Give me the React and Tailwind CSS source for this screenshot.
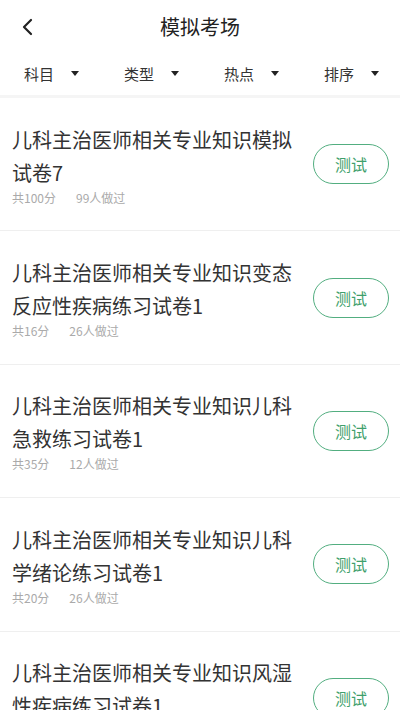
const papers = [
  { title: '儿科主治医师相关专业知识模拟试卷7', total: 100, done: 99 },
  { title: '儿科主治医师相关专业知识变态反应性疾病练习试卷1', total: 16, done: 26 },
  { title: '儿科主治医师相关专业知识儿科急救练习试卷1', total: 35, done: 12 },
  { title: '儿科主治医师相关专业知识儿科学绪论练习试卷1', total: 20, done: 26 },
  { title: '儿科主治医师相关专业知识风湿性疾病练习试卷1', total: 18, done: 20 },
]

const filters = ['科目', '类型', '热点', '排序']

export default function App() {
  return (
    <div
      className="w-[400px] h-[710px] overflow-hidden bg-[#f5f5f5]"
      style={{ fontFamily: '"Noto Sans CJK SC", "Noto Sans", sans-serif' }}
    >
      {/* Header */}
      <div className="bg-white">
        <div className="relative h-[54px] flex items-center justify-center">
          <button className="absolute left-[20px] top-[17px] text-[#222]" aria-label="返回">
            <BackIcon />
          </button>
          <h1 className="text-[20px] text-[#222] leading-none">模拟考场</h1>
        </div>

        {/* Filter row */}
        <div className="h-[41px] pb-[3px] flex items-center">
          {filters.map(f => (
            <div key={f} className="w-[100px] pl-6 flex items-center">
              <span className="text-[15px] text-[#333] leading-none">{f}</span>
              <Caret />
            </div>
          ))}
        </div>
      </div>

      {/* List */}
      <div className="mt-[3px] flex flex-col">
        {papers.map((p, i) => (
          <div key={i} className="bg-white h-[133.4px] shrink-0 border-b border-[#efefef] flex items-center pl-3 pr-[11px]">
            <div className="flex-1 min-w-0">
              <p className="w-[290px] text-[20px] leading-[33px] text-[#333]">{p.title}</p>
              <div className="flex text-[12px] leading-4 text-[#aaa] mt-[1px]">
                <span>共{p.total}分</span>
                <span className="ml-5">{p.done}人做过</span>
              </div>
            </div>
            <button className="w-[76px] h-[40px] rounded-full border-[1.5px] border-[#52ae80] text-[#3f9f6c] text-[16px] shrink-0">
              测试
            </button>
          </div>
        ))}
      </div>
    </div>
  )
}

function BackIcon() {
  return (
    <svg width="16" height="20" viewBox="0 0 16 20" fill="none" stroke="currentColor" strokeWidth="2.2" strokeLinecap="round" strokeLinejoin="round">
      <polyline points="11,3 4,10 11,17" />
    </svg>
  )
}

function Caret() {
  return (
    <svg className="ml-[17px]" width="8" height="5" viewBox="0 0 8 5">
      <polygon points="0,0 8,0 4,5" fill="#222" />
    </svg>
  )
}
